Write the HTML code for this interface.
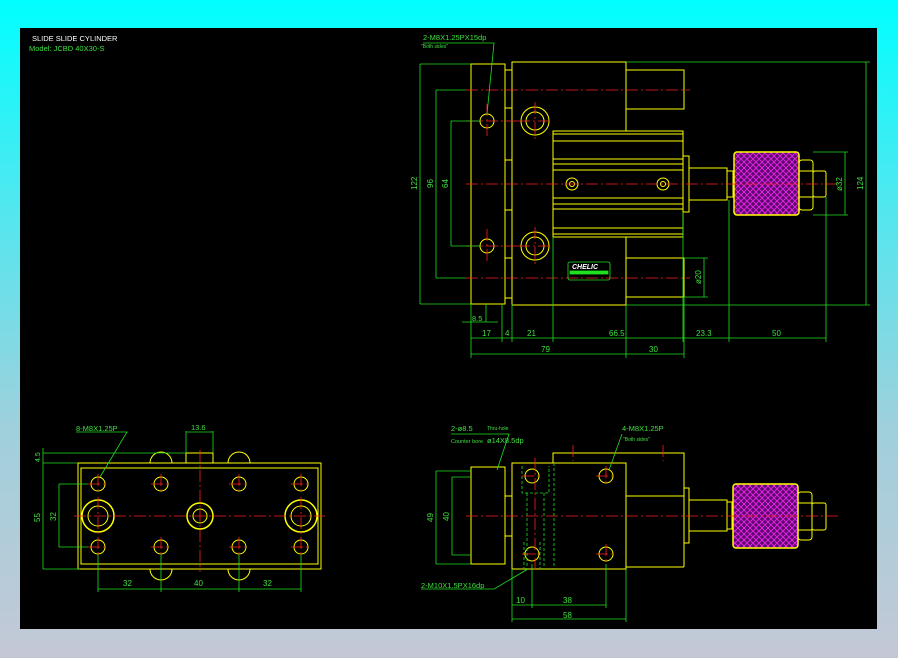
<!DOCTYPE html>
<html><head><meta charset="utf-8"><style>
html,body{margin:0;padding:0;width:898px;height:658px;overflow:hidden;background:linear-gradient(180deg,#00ffff 0%,#4ee8f0 30%,#9fd0dc 65%,#c4c8d6 100%);}
svg{position:absolute;left:0;top:0}
text{font-family:"Liberation Sans",sans-serif;}
</style></head><body>
<svg width="898" height="658" viewBox="0 0 898 658" xmlns="http://www.w3.org/2000/svg">
<defs>
<pattern id="h" width="6" height="6" patternUnits="userSpaceOnUse">
<rect width="6" height="6" fill="#5a0a6a"/>
<path d="M0 0L6 6M6 0L0 6" stroke="#e020e0" stroke-width="1"/>
</pattern>
</defs>
<rect x="20" y="28" width="857" height="601" fill="#000"/>
<text x="32" y="41" fill="#fff" font-size="7.5">SLIDE SLIDE CYLINDER</text>
<text x="29" y="51" fill="#3ee03e" font-size="7.5">Model: JCBD 40X30-S</text>

<!-- ===== TOP VIEW ===== -->
<g fill="none" stroke="#ffff00" stroke-width="1">
<rect x="471" y="64" width="34" height="240"/>
<rect x="505" y="70" width="7" height="228"/>
<path d="M505 108H512M505 258H512M505 160H512M505 210H512"/>
<rect x="512" y="62" width="114" height="243"/>
<rect x="626" y="70" width="58" height="39"/>
<rect x="626" y="258" width="58" height="39"/>
<rect x="553" y="131" width="130" height="106" fill="#000"/>
<path d="M553 134H683M553 141H683M553 159H683M553 164H683M553 170H683M553 198H683M553 204H683M553 209H683M553 228H683M553 234H683"/>
<rect x="683" y="156" width="6" height="56"/>
<rect x="689" y="168" width="38" height="32"/>
<rect x="727" y="171" width="6" height="26"/>
<rect x="734" y="152" width="65" height="63" rx="3" fill="url(#h)" stroke-width="1.5"/>
<rect x="799" y="160" width="14" height="50" rx="3"/>
<path d="M799 171H813M799 197H813"/>
<rect x="813" y="171" width="13" height="26" rx="2"/>
<circle cx="487" cy="121" r="7"/><circle cx="487" cy="246" r="7"/>
<circle cx="535" cy="121" r="14"/><circle cx="535" cy="121" r="9"/>
<circle cx="535" cy="246" r="14"/><circle cx="535" cy="246" r="9"/>
<circle cx="572" cy="184" r="6"/><circle cx="663" cy="184" r="6"/>
<circle cx="572" cy="184" r="2.5"/><circle cx="663" cy="184" r="2.5"/>
</g>
<g stroke="#ff2020" stroke-width="0.8" stroke-dasharray="12 3 2 3" fill="none">
<path d="M466 184H838M466 90H690M466 278H690M466 121H520M466 246H520"/>
<path d="M487 104V138M487 229V263M535 102V140M535 227V265M518 121H553M518 246H553"/>
</g>
<g fill="none" stroke="#20e020" stroke-width="0.8">
<path d="M626 62H870M626 305H870M420 64H471M420 304H471M436 90H466M436 278H466M451 121H480M451 246H480"/>
<path d="M420 64V304M436 90V278M451 121V246M866 62V305M845 152V215M813 152H848M813 215H848M704 258V297M684 258H708M684 297H708"/>
<path d="M471 304V358M502 304V342M512 304V342M553 237V342M626 305V358M683 212V342M684 297V358M729 200V342M826 197V342M471 338H826M471 354H684"/>
<path d="M462 322H498M486 304V322"/>
<path d="M487 114L494 43H423"/>
<rect x="568" y="262" width="42" height="18" rx="2" stroke="#20e020"/>
<rect x="570" y="271" width="38" height="3" fill="#20e020"/>
</g>
<g fill="#3ee03e" font-size="8">
<text x="423" y="40" font-size="7.5">2-M8X1.25PX15dp</text>
<text x="421" y="48" font-size="5">"Both sides"</text>
<text x="572" y="269" font-size="7" fill="#fff" font-style="italic" font-weight="bold">CHELIC</text>
<text x="472" y="321" font-size="7.5">8.5</text>
<text x="482" y="336">17</text><text x="505" y="336">4</text><text x="527" y="336">21</text>
<text x="609" y="336">66.5</text><text x="696" y="336">23.3</text><text x="772" y="336">50</text>
<text x="541" y="352">79</text><text x="649" y="352">30</text>
<text transform="translate(417,190) rotate(-90)">122</text>
<text transform="translate(433,188) rotate(-90)">96</text>
<text transform="translate(448,188) rotate(-90)">64</text>
<text transform="translate(863,190) rotate(-90)">124</text>
<text transform="translate(842,191) rotate(-90)">ø32</text>
<text transform="translate(701,284) rotate(-90)">ø20</text>
</g>

<!-- ===== BOTTOM LEFT VIEW ===== -->
<g fill="none" stroke="#ffff00" stroke-width="1">
<rect x="78" y="463" width="243" height="106"/>
<rect x="81" y="468" width="237" height="96"/>
<rect x="186" y="453" width="27" height="10"/>
<path d="M150 463A11 11 0 0 1 172 463M228 463A11 11 0 0 1 250 463M150 569A11 11 0 0 0 172 569M228 569A11 11 0 0 0 250 569"/>
<circle cx="98" cy="484" r="7"/><circle cx="161" cy="484" r="7"/><circle cx="239" cy="484" r="7"/><circle cx="301" cy="484" r="7"/>
<circle cx="98" cy="547" r="7"/><circle cx="161" cy="547" r="7"/><circle cx="239" cy="547" r="7"/><circle cx="301" cy="547" r="7"/>
<circle cx="98" cy="516" r="16" stroke-width="1.5"/><circle cx="98" cy="516" r="10"/>
<circle cx="301" cy="516" r="16" stroke-width="1.5"/><circle cx="301" cy="516" r="10"/>
<circle cx="200" cy="516" r="13" stroke-width="1.5"/><circle cx="200" cy="516" r="7"/>
</g>
<g stroke="#ff2020" stroke-width="0.8" stroke-dasharray="12 3 2 3" fill="none">
<path d="M74 516H325M200 450V572"/>
<path d="M88 484H108M151 484H171M229 484H249M291 484H311M88 547H108M151 547H171M229 547H249M291 547H311M98 474V494M161 474V494M239 474V494M301 474V494M98 537V557M161 537V557M239 537V557M301 537V557M98 497V535M301 497V535"/>
</g>
<g fill="none" stroke="#20e020" stroke-width="0.8">
<path d="M43 448V569M43 453H186M43 463H78M43 569H80M59 484V547M59 484H88M59 547H88"/>
<path d="M98 555V592M161 555V592M239 555V592M301 555V592M98 589H301"/>
<path d="M186 453V431M213 453V431M186 432H213"/>
<path d="M76 432H127L100 477"/>
</g>
<g fill="#3ee03e" font-size="8">
<text x="76" y="431" font-size="7.5">8-M8X1.25P</text>
<text x="191" y="430" font-size="7.5">13.6</text>
<text x="123" y="586">32</text><text x="194" y="586">40</text><text x="263" y="586">32</text>
<text transform="translate(40,462) rotate(-90)" font-size="7">4.5</text>
<text transform="translate(40,522) rotate(-90)">55</text>
<text transform="translate(56,521) rotate(-90)">32</text>
</g>

<!-- ===== BOTTOM RIGHT VIEW ===== -->
<g fill="none" stroke="#ffff00" stroke-width="1">
<rect x="471" y="467" width="34" height="97"/>
<rect x="505" y="496" width="7" height="40"/>
<path d="M553 463V453H684V567M626 496H684M626 567H684"/>
<rect x="512" y="463" width="114" height="106"/>
<rect x="684" y="488" width="5" height="55"/>
<rect x="689" y="500" width="38" height="31"/>
<rect x="727" y="502" width="5" height="27"/>
<rect x="733" y="484" width="65" height="64" rx="3" fill="url(#h)" stroke-width="1.5"/>
<rect x="798" y="492" width="14" height="48" rx="3"/>
<path d="M798 503H812M798 530H812"/>
<rect x="812" y="503" width="14" height="27" rx="2"/>
<circle cx="532" cy="476" r="7"/><circle cx="532" cy="554" r="7"/>
<circle cx="606" cy="476" r="7"/><circle cx="606" cy="554" r="7"/>
</g>
<g fill="none" stroke="#20e020" stroke-width="0.8" stroke-dasharray="3 2">
<path d="M522 466V493H549V466M527 493V569M544 493V569M524 542V569M540 542V569M554 463V569"/>
</g>
<g stroke="#ff2020" stroke-width="0.8" stroke-dasharray="12 3 2 3" fill="none">
<path d="M466 516H840M535 458V572M573 445V461M663 445V461"/>
<path d="M522 476H542M596 476H616M522 554H542M596 554H616M606 466V486M606 544V564"/>
</g>
<g fill="none" stroke="#20e020" stroke-width="0.8">
<path d="M436 471V564M436 471H471M436 564H471M452 477V555M452 477H471M452 555H471"/>
<path d="M512 569V622M532 564V608M606 564V608M626 569V622M512 605H606M512 619H626"/>
<path d="M451 434H509L497 470"/>
<path d="M622 434L609 470"/>
<path d="M421 589H494L528 569"/>
</g>
<g fill="#3ee03e" font-size="7.5">
<text x="451" y="431">2-ø8.5</text><text x="487" y="430" font-size="5">Thru-hole</text>
<text x="451" y="443" font-size="5.5">Counter bore</text><text x="487" y="443">ø14X8.5dp</text>
<text x="622" y="431">4-M8X1.25P</text>
<text x="623" y="441" font-size="5">"Both sides"</text>
<text x="421" y="588">2-M10X1.5PX16dp</text>
<text x="516" y="603" font-size="8">10</text><text x="563" y="603" font-size="8">38</text>
<text x="563" y="618" font-size="8">58</text>
<text transform="translate(433,522) rotate(-90)" font-size="8">49</text>
<text transform="translate(449,521) rotate(-90)" font-size="8">40</text>
</g>
</svg>
</body></html>
